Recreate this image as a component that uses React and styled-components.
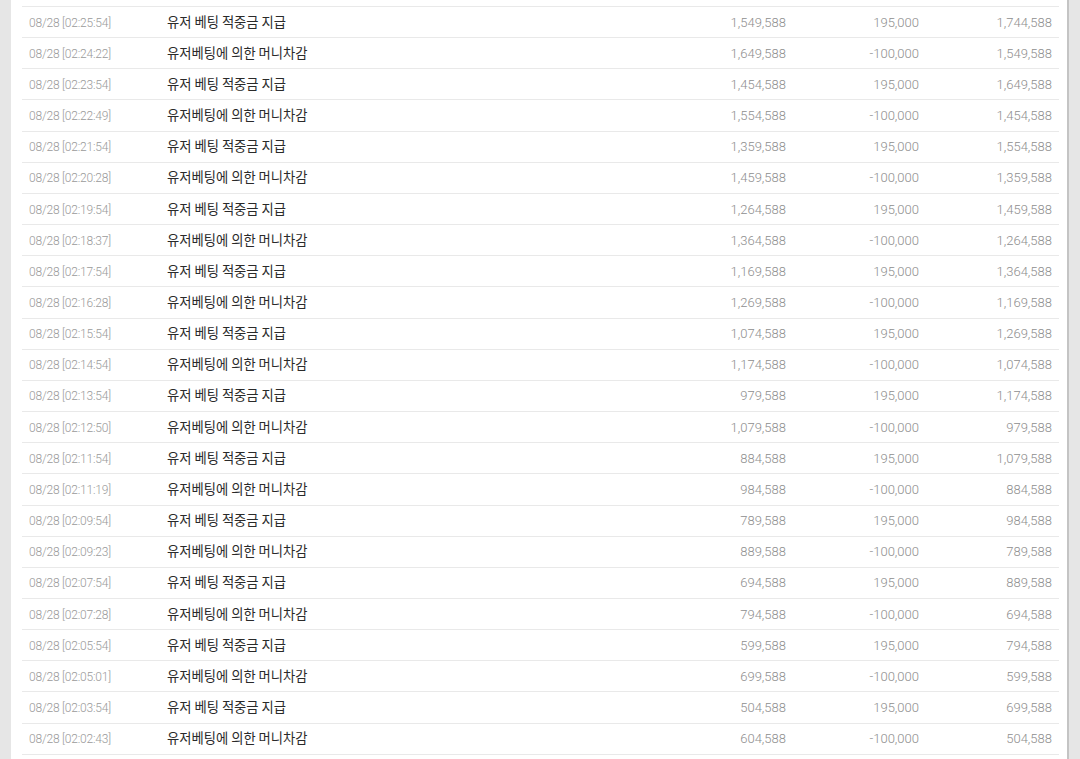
import styled, { createGlobalStyle } from "styled-components";

const GlobalStyle = createGlobalStyle`
  html, body {
    margin: 0;
    padding: 0;
    background: #e6e6e6;
  }
`;

const Page = styled.div`
  width: 1080px;
  height: 759px;
  overflow: hidden;
  background: #e6e6e6;
  padding-left: 11px;
  box-sizing: border-box;
`;

const Panel = styled.div`
  width: 1058px;
  height: 100%;
  background: #ffffff;
  border-right: 2px solid #c4c4c4;
  padding: 6px 10px 0 11px;
  box-sizing: border-box;
`;

const Table = styled.table`
  width: 1037px;
  border-collapse: collapse;
  table-layout: fixed;
  border-top: 1px solid #e9e9e9;
`;

const Row = styled.tr`
  height: 31.17px;
  border-bottom: 1px solid #e9e9e9;
`;

const Cell = styled.td`
  padding: 0 7px;
  vertical-align: middle;
  white-space: nowrap;
  text-align: ${(props) => (props.right ? "right" : "left")};
  font-family: Roboto, "Liberation Sans", sans-serif;
  font-weight: 300;
  font-size: 13px;
  color: #8e8e8e;
`;

const Title = styled.td`
  padding: 0 7px 2px;
  vertical-align: middle;
  white-space: nowrap;
  font-family: "Noto Sans CJK KR", "Noto Sans", sans-serif;
  font-weight: 400;
  font-size: 13.3px;
  color: #2a2a2a;
`;

const DateText = styled.span`
  font-size: 12px;
  letter-spacing: -0.2px;
  color: #9a9a9a;
`;

const WIN = "유저 베팅 적중금 지급";
const BET = "유저베팅에 의한 머니차감";

const rows = [
  ["02:25:54", WIN, "1,549,588", "195,000", "1,744,588"],
  ["02:24:22", BET, "1,649,588", "-100,000", "1,549,588"],
  ["02:23:54", WIN, "1,454,588", "195,000", "1,649,588"],
  ["02:22:49", BET, "1,554,588", "-100,000", "1,454,588"],
  ["02:21:54", WIN, "1,359,588", "195,000", "1,554,588"],
  ["02:20:28", BET, "1,459,588", "-100,000", "1,359,588"],
  ["02:19:54", WIN, "1,264,588", "195,000", "1,459,588"],
  ["02:18:37", BET, "1,364,588", "-100,000", "1,264,588"],
  ["02:17:54", WIN, "1,169,588", "195,000", "1,364,588"],
  ["02:16:28", BET, "1,269,588", "-100,000", "1,169,588"],
  ["02:15:54", WIN, "1,074,588", "195,000", "1,269,588"],
  ["02:14:54", BET, "1,174,588", "-100,000", "1,074,588"],
  ["02:13:54", WIN, "979,588", "195,000", "1,174,588"],
  ["02:12:50", BET, "1,079,588", "-100,000", "979,588"],
  ["02:11:54", WIN, "884,588", "195,000", "1,079,588"],
  ["02:11:19", BET, "984,588", "-100,000", "884,588"],
  ["02:09:54", WIN, "789,588", "195,000", "984,588"],
  ["02:09:23", BET, "889,588", "-100,000", "789,588"],
  ["02:07:54", WIN, "694,588", "195,000", "889,588"],
  ["02:07:28", BET, "794,588", "-100,000", "694,588"],
  ["02:05:54", WIN, "599,588", "195,000", "794,588"],
  ["02:05:01", BET, "699,588", "-100,000", "599,588"],
  ["02:03:54", WIN, "504,588", "195,000", "699,588"],
  ["02:02:43", BET, "604,588", "-100,000", "504,588"],
];

const App = () => {
  return (
    <>
      <GlobalStyle />
      <Page>
        <Panel>
          <Table>
            <colgroup>
              <col style={{ width: 138 }} />
              <col />
              <col style={{ width: 133 }} />
              <col style={{ width: 133 }} />
              <col style={{ width: 133 }} />
            </colgroup>
            <tbody>
              {rows.map((r) => (
                <Row key={r[0]}>
                  <Cell>
                    <DateText>08/28 [{r[0]}]</DateText>
                  </Cell>
                  <Title>{r[1]}</Title>
                  <Cell right>{r[2]}</Cell>
                  <Cell right>{r[3]}</Cell>
                  <Cell right>{r[4]}</Cell>
                </Row>
              ))}
            </tbody>
          </Table>
        </Panel>
      </Page>
    </>
  );
};

export default App;
